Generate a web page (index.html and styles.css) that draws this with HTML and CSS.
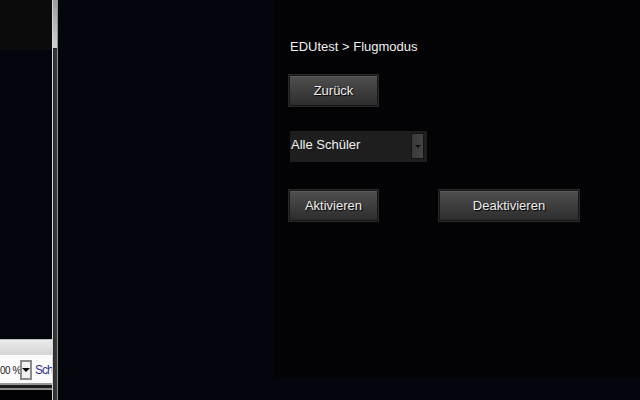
FILE: index.html
```html
<!DOCTYPE html>
<html lang="de">
<head>
<meta charset="utf-8">
<title>EDUtest - Flugmodus</title>
<link rel="stylesheet" href="styles.css">
</head>
<body>
<div class="app">
  <aside class="left">
    <div class="left-top"></div>
    <div class="left-fill"></div>
    <div class="toolbar">
      <div class="tb-head"></div>
      <div class="tb-row">
        <span class="zoom-val">00 %</span>
        <span class="tb-drop"><span class="tb-tri"></span></span>
        <span class="tb-sch">Sch</span>
      </div>
    </div>
    <div class="tb-lines">
      <div class="ln-a"></div>
      <div class="ln-b"></div>
      <div class="ln-c"></div>
    </div>
  </aside>
  <div class="scrollbar"><div class="thumb"></div><div class="track"></div></div>
  <main class="stage">
    <section class="panel">
      <div class="crumb">EDUtest &gt; Flugmodus</div>
      <button class="btn btn-back">Zurück</button>
      <div class="select">
        <span class="select-label">Alle Schüler</span>
        <span class="select-btn"><span class="select-tri"></span></span>
      </div>
      <div class="actions">
        <button class="btn btn-on">Aktivieren</button>
        <button class="btn btn-off">Deaktivieren</button>
      </div>
    </section>
  </main>
</div>
</body>
</html>
```
FILE: styles.css
```css
* { box-sizing: border-box; }
html, body {
  margin: 0;
  padding: 0;
  width: 640px;
  height: 400px;
  overflow: hidden;
  background: #04060e;
  font-family: "Liberation Sans", Arial, sans-serif;
}
.app {
  display: flex;
  width: 640px;
  height: 400px;
}
.left {
  width: 52px;
  display: flex;
  flex-direction: column;
  overflow: hidden;
}
.left-top { height: 50px; background: #0b0b0b; }
.left-fill { flex: 1; background: #03050d; }
.toolbar { height: 44px; display: flex; flex-direction: column; }
.tb-head {
  height: 16px;
  background: linear-gradient(#ececec, #d4d4d4);
  border-top: 1px solid #bdbdbd;
}
.tb-row {
  flex: 1;
  background: #fbfbfb;
  display: flex;
  align-items: center;
  padding-top: 2px;
  white-space: nowrap;
}
.zoom-val {
  width: 20px;
  font-size: 10px;
  color: #222;
  letter-spacing: -0.5px;
}
.tb-drop {
  width: 12px;
  height: 20px;
  border: 2px solid #8a8a8a;
  background: #f0f0f0;
  display: flex;
  align-items: center;
  justify-content: center;
  flex: none;
}
.tb-tri {
  width: 0; height: 0;
  border-left: 4px solid transparent;
  border-right: 4px solid transparent;
  border-top: 4px solid #000;
}
.tb-sch {
  margin-left: 3px;
  font-size: 12px;
  letter-spacing: -1px;
  color: #30309a;
}
.tb-lines { height: 17px; display: flex; flex-direction: column; background: #020204; }
.ln-a { height: 2px; background: #9a9a9a; }
.ln-b { height: 3px; background: #1c1c1c; }
.ln-c { height: 2px; background: #8c8c8c; }

.scrollbar {
  width: 6px;
  border-left: 1px solid #d6d6d6;
  border-right: 1px solid #8e8e8e;
  display: flex;
  flex-direction: column;
}
.thumb {
  height: 49px;
  background: linear-gradient(#9c9c9c, #d0d0d0);
  border-bottom: 1px solid #202020;
}
.track { flex: 1; background: linear-gradient(90deg, #2c2c2c, #3a3a3a); }

.stage {
  flex: 1;
  background: #04060e;
}
.panel {
  margin-left: 216px;
  width: 366px;
  height: 378px;
  background: #030305;
  padding: 39px 0 0 15px;
  display: flex;
  flex-direction: column;
  align-items: flex-start;
}
.crumb {
  height: 16px;
  line-height: 16px;
  font-size: 13px;
  color: #f0f0f0;
  margin-left: 1px;
}
.btn {
  height: 31px;
  padding: 0;
  font-family: "Liberation Sans", Arial, sans-serif;
  font-size: 13px;
  color: #ececec;
  text-shadow: 1px 1px 1px #000;
  border: 1px solid #161616;
  outline: 1px solid #2a2a2a;
  box-shadow: inset 0 1px 0 #5c5c5c;
  background: linear-gradient(#4f4f4f, #2d2d2d);
}
.btn-back { width: 89px; margin-top: 20px; }
.select {
  margin-top: 25px;
  margin-left: 1px;
  width: 137px;
  height: 31px;
  background: #1e1e1e;
  display: flex;
  align-items: center;
  justify-content: space-between;
  padding: 2px 3px 3px 1px;
}
.select-label {
  font-size: 13px;
  color: #f0f0f0;
  padding-bottom: 3px;
}
.select-btn {
  width: 13px;
  height: 26px;
  align-self: stretch;
  background: linear-gradient(90deg, #3a3a3a, #444);
  border: 1px solid #141414;
  display: flex;
  align-items: center;
  justify-content: center;
}
.select-tri {
  width: 0; height: 0;
  border-left: 3px solid transparent;
  border-right: 3px solid transparent;
  border-top: 3px solid #0c0c0c;
}
.actions {
  margin-top: 28px;
  display: flex;
  gap: 61px;
}
.btn-on { width: 89px; }
.btn-off { width: 140px; }
```
